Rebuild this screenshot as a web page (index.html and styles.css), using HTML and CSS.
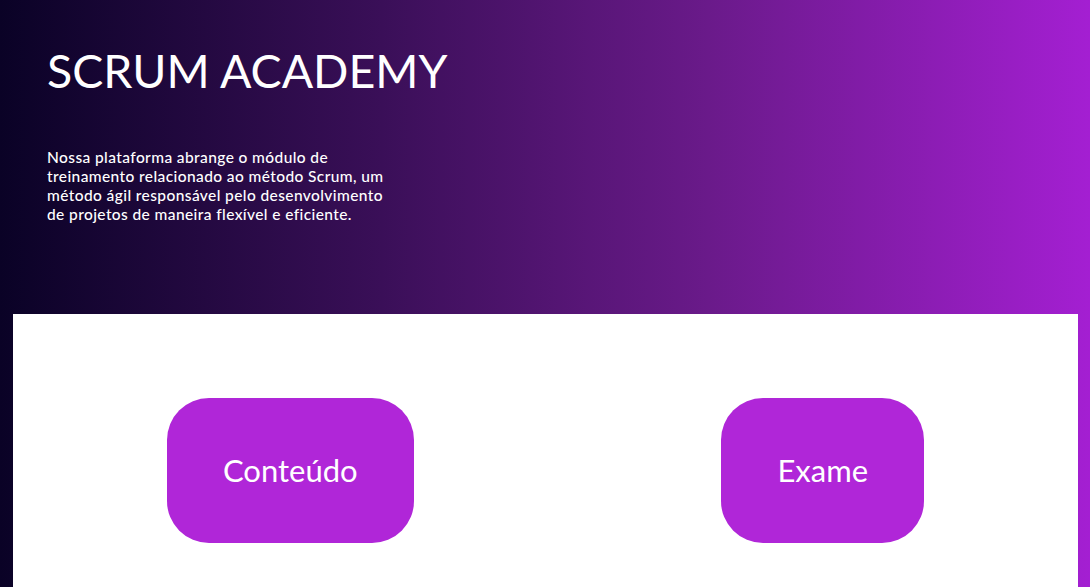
FILE: index.html
```html
<!DOCTYPE html>
<html lang="pt-BR">
<head>
<meta charset="utf-8">
<title>Scrum Academy</title>
<link rel="stylesheet" href="styles.css">
</head>
<body>
<header class="hero">
  <h1 class="hero-title">SCRUM ACADEMY</h1>
  <p class="hero-text">Nossa plataforma abrange o módulo de treinamento relacionado ao método Scrum, um método ágil responsável pelo desenvolvimento de projetos de maneira flexível e eficiente.</p>
</header>
<main class="panel">
  <a class="btn" href="#">Conteúdo</a>
  <a class="btn" href="#">Exame</a>
</main>
</body>
</html>
```
FILE: styles.css
```css
html, body {
  margin: 0;
  padding: 0;
  height: 100%;
}
body {
  background: linear-gradient(90deg, #0a0226 0%, #3a0f58 35%, #6a1a8a 65%, #a41fd2 100%);
  font-family: "Lato", "Noto Sans", sans-serif;
  color: #fff;
  padding: 0 12px 0 13px;
  box-sizing: border-box;
  overflow: hidden;
}
.hero {
  padding: 42px 34px 0;
  height: 314px;
  box-sizing: border-box;
}
.hero-title {
  margin: 0;
  font-size: 46.5px;
  font-weight: 400;
  line-height: 56px;
}
.hero-text {
  margin: 50px 0 0;
  width: 345px;
  font-size: 15.5px;
  line-height: 19px;
  font-weight: 500;
  letter-spacing: 0.4px;
}
.panel {
  background: #fff;
  display: flex;
  justify-content: space-around;
  align-items: flex-start;
  padding-top: 84px;
  height: 400px;
}
.btn {
  display: block;
  background: #b026d8;
  color: #fff;
  text-decoration: none;
  font-size: 31px;
  line-height: 45px;
  padding: 50px 56px;
  border-radius: 42px;
}
```
